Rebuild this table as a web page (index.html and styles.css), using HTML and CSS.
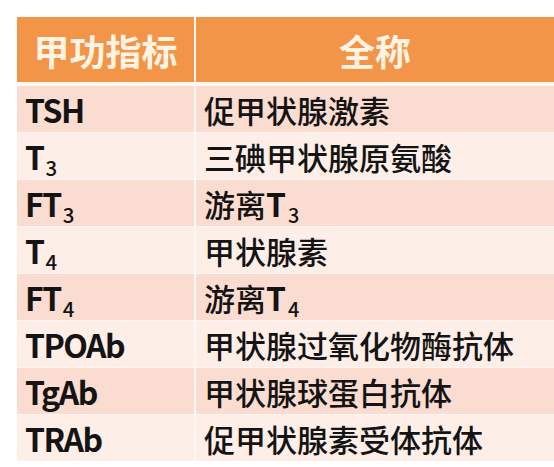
FILE: index.html
```html
<!DOCTYPE html>
<html lang="zh">
<head>
<meta charset="utf-8">
<link rel="stylesheet" href="styles.css">
</head>
<body>
<table class="thy">
  <thead>
    <tr><th class="c1">甲功指标</th><th class="c2">全称</th></tr>
  </thead>
  <tbody>
    <tr class="odd"><td class="c1 code">TSH</td><td class="c2">促甲状腺激素</td></tr>
    <tr class="even"><td class="c1 code">T<sub>3</sub></td><td class="c2">三碘甲状腺原氨酸</td></tr>
    <tr class="odd"><td class="c1 code">FT<sub>3</sub></td><td class="c2">游离<b>T</b><sub>3</sub></td></tr>
    <tr class="even"><td class="c1 code">T<sub>4</sub></td><td class="c2">甲状腺素</td></tr>
    <tr class="odd"><td class="c1 code">FT<sub>4</sub></td><td class="c2">游离<b>T</b><sub>4</sub></td></tr>
    <tr class="even"><td class="c1 code">TPOAb</td><td class="c2">甲状腺过氧化物酶抗体</td></tr>
    <tr class="odd"><td class="c1 code">TgAb</td><td class="c2">甲状腺球蛋白抗体</td></tr>
    <tr class="even last"><td class="c1 code">TRAb</td><td class="c2">促甲状腺素受体抗体</td></tr>
  </tbody>
</table>
</body>
</html>
```
FILE: styles.css
```css
html, body {
  margin: 0;
  padding: 0;
  background: #ffffff;
  overflow: hidden;
}
body {
  padding: 17px 0 0 17px;
  font-family: "Noto Sans CJK SC", "Noto Sans", sans-serif;
  color: #141414;
}
.thy {
  border-collapse: separate;
  border-spacing: 0;
  width: 537px;
  table-layout: fixed;
}
.thy .c1 {
  width: 177px;
  border-right: 2px solid #fff8f4;
}
.thy th {
  height: 65px;
  padding: 0;
  background: #f39548;
  color: #fff4e4;
  font-size: 36px;
  font-weight: 700;
  text-align: center;
  vertical-align: middle;
  border-bottom: 4px solid #fff6ee;
  line-height: 1;
}
.thy td {
  height: 46px;
  padding: 0 0 0 8px;
  font-size: 31px;
  font-weight: 500;
  line-height: 1;
  vertical-align: middle;
  border-bottom: 1px solid #fff5f1;
}
.thy tr.last td {
  border-bottom: none;
}
.thy tr.odd td {
  background: #fbdcd0;
}
.thy tr.even td {
  background: #fdeee8;
}
.thy td.code {
  font-weight: 700;
  font-size: 32px;
  letter-spacing: -1.5px;
}
.thy sub {
  font-size: 0.64em;
  font-weight: 500;
  vertical-align: -0.3em;
  line-height: 0;
  margin-left: 2px;
  letter-spacing: 0;
}
.thy td.c2 b {
  font-weight: 700;
  font-size: 32px;
}
```
